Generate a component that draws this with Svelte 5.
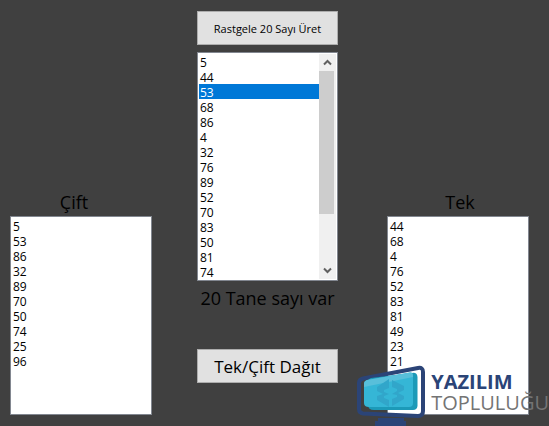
<script>
    let numbers = $state([
        5, 44, 53, 68, 86, 4, 32, 76, 89, 52, 70, 83, 50, 81, 74, 49, 25, 23,
        96, 21,
    ]);
    let selected = $state(53);
    let first = $state([5, 53, 86, 32, 89, 70, 50, 74, 25, 96]);
    let second = $state([44, 68, 4, 76, 52, 83, 81, 49, 23, 21]);

    let list;
    let scrolled = $state(0);

    // share of the list that fits in the box
    const visible = 15;
    let thumb = $derived(Math.min(100, (visible / numbers.length) * 100));

    function generate() {
        numbers = Array.from({ length: 20 }, () =>
            Math.floor(Math.random() * 100),
        );
        selected = undefined;
    }

    function distribute() {
        first = numbers.filter((_, i) => i % 2 === 0);
        second = numbers.filter((_, i) => i % 2 === 1);
    }

    function onScroll() {
        scrolled = (list.scrollTop / list.scrollHeight) * 100;
    }
</script>

<main class="form">
    <section class="column side left">
        <label class="caption" for="cift">Çift</label>
        <div class="listbox">
            <select id="cift" class="items" size="13">
                {#each first as n}
                    <option>{n}</option>
                {/each}
            </select>
        </div>
    </section>

    <section class="column middle">
        <button class="btn small" onclick={generate}>
            Rastgele 20 Sayı Üret
        </button>
        <div class="listbox">
            <select
                class="items"
                size="15"
                aria-label="Sayılar"
                bind:this={list}
                bind:value={selected}
                onscroll={onScroll}
            >
                {#each numbers as n}
                    <option value={n}>{n}</option>
                {/each}
            </select>
            <div class="scrollbar">
                <button
                    class="arrow"
                    aria-label="Yukarı"
                    onclick={() => list.scrollBy(0, -15)}
                >
                    <svg viewBox="0 0 17 17">
                        <path d="M5 10.5 8.5 7 12 10.5" />
                    </svg>
                </button>
                <div class="track">
                    <div
                        class="thumb"
                        style="height: {thumb}%; top: {scrolled}%"
                    ></div>
                </div>
                <button
                    class="arrow"
                    aria-label="Aşağı"
                    onclick={() => list.scrollBy(0, 15)}
                >
                    <svg viewBox="0 0 17 17">
                        <path d="M5 6.5 8.5 10 12 6.5" />
                    </svg>
                </button>
            </div>
        </div>
        <p class="count">{numbers.length} Tane sayı var</p>
        <button class="btn" onclick={distribute}>Tek/Çift Dağıt</button>
    </section>

    <section class="column side right">
        <label class="caption" for="tek">Tek</label>
        <div class="listbox">
            <select id="tek" class="items" size="13">
                {#each second as n}
                    <option>{n}</option>
                {/each}
            </select>
        </div>
    </section>

    <!-- LOGO -->
    <div class="logo">
        <svg class="monitor" viewBox="0 0 72 62">
            <path
                class="frame"
                d="M7 14.5 62 4Q67 3 67 8V47Q67 52 62 52L7 49.5Q3 49 3 45V19Q3 15.5 7 14.5Z"
            />
            <path class="stand" d="M22 54H48V57H50V62H19V57H22Z" />
            <path
                class="screen-back"
                d="M15 14 56 9Q61 8 61.5 13V42Q61 46 57 46H18Q12 46 12 41V18Q12 15 15 14Z"
            />
            <path
                class="screen"
                d="M11 16 54 8.5Q57 8 57 12V39Q57 43 53 43H13Q8 43 8 39V20Q8 17 11 16Z"
            />
            <path
                class="shine"
                d="M11 16 54 8.5Q57 8 57 12V13L8 23V20Q8 17 11 16Z"
            />
            <path
                class="mark"
                d="M33 15V24L28 26V28L33 30 28 32V34L33 36V43L21 36V32L27 30 21 27V23ZM36 16 48 22V26L42 29 48 32V35L36 42V35L41 33V31L36 30 41 27V25L36 23Z"
            />
        </svg>
        <div class="logo-text">
            <span class="name">YAZILIM</span>
            <span class="sub">TOPLULUĞU</span>
        </div>
    </div>
</main>

<style>
    :global(body) {
        margin: 0;
        background: #404040;
    }

    .form {
        position: relative;
        box-sizing: border-box;
        min-height: 100vh;
        display: grid;
        grid-template-columns: 142fr 145fr 142fr;
        column-gap: 45px;
        align-items: end;
        padding: 11px 20px 11px 10px;
        font-family: "Open Sans", "Noto Sans", sans-serif;
        color: #000;
    }

    .column {
        display: flex;
        flex-direction: column;
        min-width: 0;
    }
    .middle {
        align-self: start;
        padding-right: 4px;
    }

    .caption,
    .count {
        margin: 0;
        font-size: 18px;
        line-height: 24px;
        text-align: center;
        white-space: nowrap;
    }
    .caption {
        margin-bottom: 2px;
    }
    .left .caption {
        padding-right: 14px;
    }
    .right .caption {
        padding-left: 4px;
    }
    .count {
        margin: 5px 0 39px;
    }

    .btn {
        height: 34px;
        padding: 0;
        border: 1px solid #adadad;
        background: #e1e1e1;
        color: #000;
        font-family: inherit;
        font-size: 17px;
        white-space: nowrap;
    }
    .btn.small {
        margin-bottom: 7px;
        font-size: 11px;
    }
    .btn:hover {
        border-color: #0078d7;
        background: #e5f1fb;
    }

    /* LIST BOXES */
    .listbox {
        display: flex;
        padding: 1px;
        border: 1px solid #828790;
        background: #fff;
    }
    .items {
        flex: 1;
        min-width: 0;
        height: 195px;
        padding: 0;
        border: 0;
        border-radius: 0;
        outline: 0;
        background: #fff;
        font-family: inherit;
        font-size: 12px;
        overflow-y: auto;
        scrollbar-width: none;
    }
    .middle .items {
        height: 225px;
    }
    .items option {
        box-sizing: border-box;
        height: 15px;
        min-height: 15px;
        padding: 0 1px;
        line-height: 15px;
        color: #000;
    }
    .items option:checked {
        background: linear-gradient(#0078d7, #0078d7);
        -webkit-text-fill-color: #fff;
    }

    .scrollbar {
        width: 17px;
        display: flex;
        flex-direction: column;
        background: #f0f0f0;
    }
    .arrow {
        width: 17px;
        height: 17px;
        padding: 0;
        border: 0;
        background: #f0f0f0;
    }
    .arrow svg {
        display: block;
        width: 17px;
        height: 17px;
        fill: none;
        stroke: #606060;
        stroke-width: 2;
    }
    .track {
        position: relative;
        flex: 1;
    }
    .thumb {
        position: absolute;
        left: 0;
        width: 15px;
        background: #cdcdcd;
    }

    /* LOGO */
    .logo {
        position: absolute;
        right: 0;
        bottom: 0;
        display: flex;
        gap: 3px;
        pointer-events: none;
    }
    .monitor {
        width: 72px;
        height: 62px;
    }
    .frame {
        fill: none;
        stroke: #2b4477;
        stroke-width: 4;
    }
    .stand {
        fill: #2b4477;
    }
    .screen-back {
        fill: #1c9ab8;
    }
    .screen {
        fill: #35b6d6;
    }
    .shine {
        fill: #58bfda;
    }
    .mark {
        fill: #31a6ca;
    }
    .logo-text {
        display: flex;
        flex-direction: column;
        padding-top: 7px;
        font-size: 20px;
        line-height: 21px;
    }
    .name {
        color: #2b4477;
        font-weight: 700;
    }
    .sub {
        color: #747474;
    }
</style>
